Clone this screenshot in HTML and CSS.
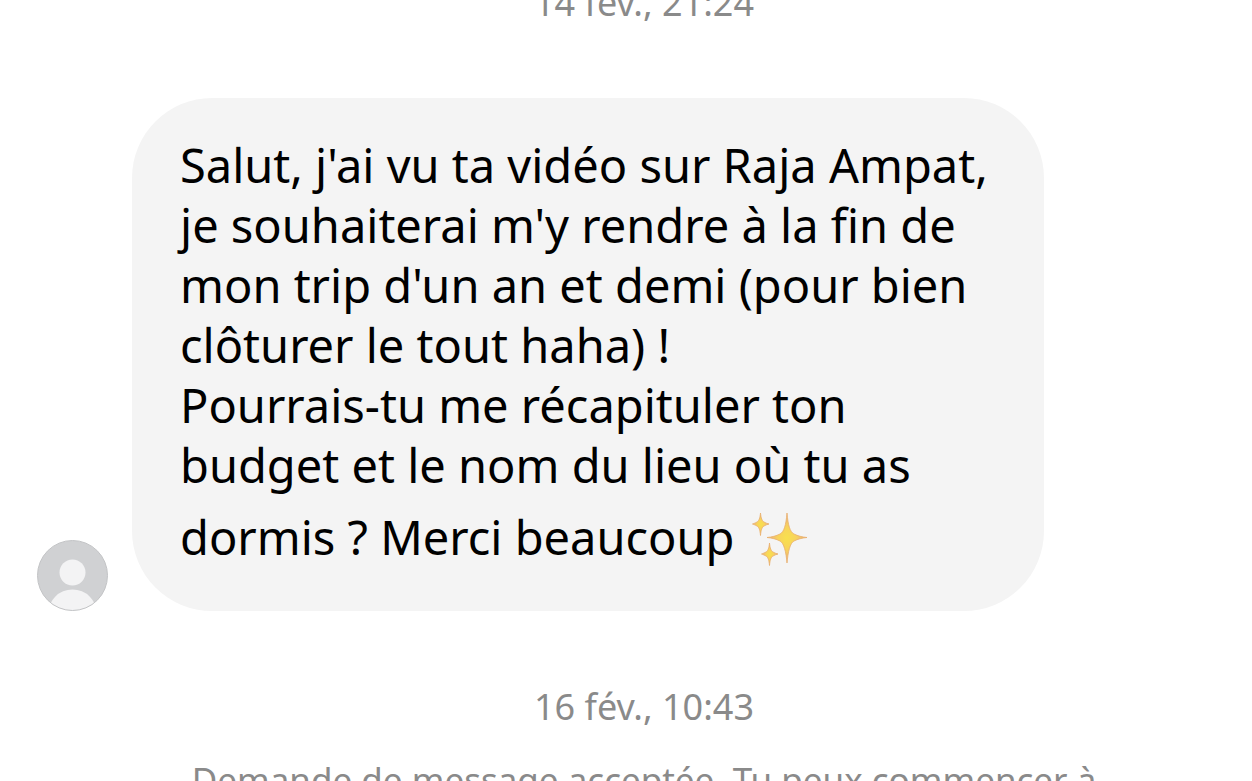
FILE: index.html
```html
<!DOCTYPE html>
<html lang="fr">
<head>
<meta charset="utf-8">
<meta name="viewport" content="width=device-width, initial-scale=1">
<title>Messages</title>
<link rel="stylesheet" href="styles.css">
</head>
<body>
<main class="chat">
  <time class="date">14 fév., 21:24</time>
  <article class="message">
    <svg class="avatar" viewBox="0 0 72 72" role="img" aria-label="Avatar">
      <defs><clipPath id="disc"><circle cx="36.500" cy="36.500" r="35"/></clipPath></defs>
      <circle cx="36.500" cy="36.500" r="35" fill="#d0d1d3"/>
      <g clip-path="url(#disc)" fill="#f3f3f4"><circle cx="36.500" cy="33.500" r="13"/><circle cx="36.500" cy="75" r="24.5"/></g>
      <circle cx="36.500" cy="36.500" r="35" fill="none" stroke="#c3c4c6" stroke-width="1"/>
    </svg>
    <p class="bubble">
      <span class="line">Salut, j'ai vu ta vidéo sur Raja Ampat,</span>
      <span class="line">je souhaiterai m'y rendre à la fin de</span>
      <span class="line">mon trip d'un an et demi (pour bien</span>
      <span class="line">clôturer le tout haha) !</span>
      <span class="line">Pourrais-tu me récapituler ton</span>
      <span class="line">budget et le nom du lieu où tu as</span>
      <span class="line last">dormis ? Merci beaucoup
        <svg class="sparkles" viewBox="0 0 56 60" role="img" aria-label="Étincelles">
          <defs>
            <radialGradient id="gold">
              <stop offset="0" stop-color="#f8e04e"/>
              <stop offset="0.45" stop-color="#f8d35c"/>
              <stop offset="1" stop-color="#e9ad80"/>
            </radialGradient>
          </defs>
          <g fill="url(#gold)" stroke="#e8ae6c" stroke-width="0.8" stroke-linejoin="round">
            <path d="M35 1C36 13 38 20 42 22C46 24 50 25 55 25.500C50 26 46 27 42 29C38 31 36 40 35 51C34 40 32 31 28 29C24 27 20 26 15 25.500C20 25 24 24 28 22C32 20 34 13 35 1Z"/>
            <path d="M8.500 1C9 6 10 9 12 10C14 11 15 11.500 17 12C15 12.500 14 13 12 14C10 15 9 18 8.500 23.500C8 18 7 15 5 14C3 13 2 12.500 0.500 12C2 11.500 3 11 5 10C7 9 8 6 8.500 1Z"/>
            <path d="M17.500 31C18 36 19 39 21 40C23 41 24 41.500 26 42C24 42.500 23 43 21 44C19 45 18 48 17.500 53.500C17 48 16 45 14 44C12 43 11 42.500 9.500 42C11 41.500 12 41 14 40C16 39 17 36 17.500 31Z"/>
          </g>
        </svg></span>
    </p>
  </article>
  <time class="date">16 fév., 10:43</time>
  <p class="notice">Demande de message acceptée. Tu peux commencer à</p>
</main>
</body>
</html>
```
FILE: styles.css
```css
* { box-sizing: border-box; }
html { overflow: hidden; }
body { margin: 0; background: #fff; color: #000; font-family: "Noto Sans", sans-serif; }
.chat { display: flex; flex-direction: column; padding-left: 36px; }
.date, .notice { color: #8a8a8a; font-size: 36px; line-height: 48px; text-align: center; }
.date:first-child { margin-top: -21px; }
.message { display: flex; align-items: flex-end; gap: 24px; margin: 71px 0 72px; }
.avatar { width: 72px; height: 72px; flex: none; }
.bubble { margin: 0; padding: 37px 48px 32px; border-radius: 80px; background: #f4f4f4; font-size: 47px; line-height: 60px; width: 75%; }
.line { display: block; white-space: nowrap; }
.last { line-height: 84px; }
.sparkles { width: 56px; height: 60px; margin-left: 5px; vertical-align: middle; }
.notice { margin: 25px 0 0; font-size: 35px; white-space: nowrap; }
```
